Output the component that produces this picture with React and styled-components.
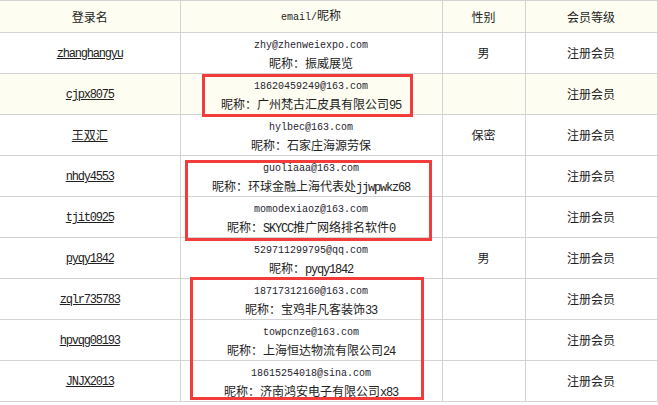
import React from "react";
import styled, { createGlobalStyle } from "styled-components";

const members = [
  { name: "zhanghangyu", email: "zhy@zhenweiexpo.com", nick: "振威展览", sex: "男" },
  { name: "cjpx8075", email: "18620459249@163.com", nick: "广州梵古汇皮具有限公司95", sex: "", shaded: true },
  { name: "王双汇", email: "hylbec@163.com", nick: "石家庄海源劳保", sex: "保密", cjk: true },
  { name: "nhdy4553", email: "guoliaaa@163.com", nick: "环球金融上海代表处jjwpwkz68", sex: "" },
  { name: "tjit0925", email: "momodexiaoz@163.com", nick: "SKYCC推广网络排名软件0", sex: "" },
  { name: "pyqy1842", email: "529711299795@qq.com", nick: "pyqy1842", sex: "男" },
  { name: "zqlr735783", email: "18717312160@163.com", nick: "宝鸡非凡客装饰33", sex: "" },
  { name: "hpvqg08193", email: "towpcnze@163.com", nick: "上海恒达物流有限公司24", sex: "" },
  { name: "JNJX2013", email: "18615254018@sina.com", nick: "济南鸿安电子有限公司x83", sex: "" },
];

// red annotation frames drawn over the table
const marks = [
  { left: 202, top: 74, width: 211, height: 43 },
  { left: 185, top: 160, width: 247, height: 81 },
  { left: 190, top: 277, width: 234, height: 123 },
];

// split a nickname into cjk and latin runs, latin gets the fixed width font
const splitRuns = (text) => text.split(/([A-Za-z0-9]+)/).filter(Boolean);

const GlobalStyle = createGlobalStyle`
  body {
    margin: 0;
    background: #fff;
    font-family: "Noto Sans CJK SC", "Liberation Sans", sans-serif;
    color: #222;
  }
`;

const Wrap = styled.div`
  position: relative;
  width: 658px;
  height: 405px;
  overflow: hidden;
`;

const Table = styled.table`
  width: 657px;
  border-collapse: collapse;
  table-layout: fixed;
`;

const Row = styled.tr`
  height: ${(p) => (p.$head ? "32px" : "41px")};
  background: ${(p) => (p.$shaded ? "#fdfdf1" : "#fff")};
`;

const HeadCell = styled.th`
  border: 1px solid #d3d3d3;
  padding: 0;
  font-weight: normal;
  font-size: 12px;
  line-height: 16px;
  text-align: center;
  vertical-align: middle;
  color: #222;

  &:first-child {
    border-left: none;
  }
`;

const Cell = styled.td`
  border: 1px solid #d3d3d3;
  padding: 0;
  font-size: 12px;
  line-height: 16px;
  text-align: center;
  vertical-align: middle;

  &:first-child {
    border-left: none;
  }
`;

const InfoCell = styled(Cell)`
  vertical-align: top;
  padding-top: 5px;
`;

const Mono = styled.span`
  font-family: "Liberation Mono", "Noto Sans CJK SC", monospace;
  font-size: 10px;
`;

const Latin = styled.span`
  font-family: "Liberation Mono", monospace;
  font-size: 12px;
  letter-spacing: -1.2px;
`;

const NameLink = styled.a`
  color: #222;
  text-decoration: underline;
  font-family: ${(p) =>
    p.$cjk ? `"Noto Sans CJK SC", sans-serif` : `"Liberation Mono", monospace`};
  font-size: 12px;
  letter-spacing: ${(p) => (p.$cjk ? "0" : "-1.2px")};
`;

const Email = styled.div`
  height: 15px;
  font-family: "Liberation Mono", monospace;
  font-size: 10px;
  line-height: 15px;
  color: #1f2430;
`;

const Nick = styled.div`
  height: 20px;
  font-size: 12px;
  line-height: 20px;
  white-space: nowrap;
  overflow: hidden;
`;

const Mark = styled.div`
  position: absolute;
  border: 3px solid #f23b3b;
  box-sizing: border-box;
  pointer-events: none;
`;

export default function App() {
  return (
    <>
      <GlobalStyle />
      <Wrap>
        <Table>
          <colgroup>
            <col style={{ width: 180 }} />
            <col style={{ width: 262 }} />
            <col style={{ width: 83 }} />
            <col style={{ width: 132 }} />
          </colgroup>
          <thead>
            <Row $head $shaded>
              <HeadCell>登录名</HeadCell>
              <HeadCell>
                <Mono>email/</Mono>昵称
              </HeadCell>
              <HeadCell>性别</HeadCell>
              <HeadCell>会员等级</HeadCell>
            </Row>
          </thead>
          <tbody>
            {members.map((m) => (
              <Row key={m.name} $shaded={m.shaded}>
                <Cell>
                  <NameLink href="#" $cjk={m.cjk}>
                    {m.name}
                  </NameLink>
                </Cell>
                <InfoCell>
                  <Email>{m.email}</Email>
                  <Nick>
                    昵称：
                    {splitRuns(m.nick).map((part, i) =>
                      /^[A-Za-z0-9]+$/.test(part) ? (
                        <Latin key={i}>{part}</Latin>
                      ) : (
                        <span key={i}>{part}</span>
                      )
                    )}
                  </Nick>
                </InfoCell>
                <Cell>{m.sex}</Cell>
                <Cell>注册会员</Cell>
              </Row>
            ))}
          </tbody>
        </Table>
        {marks.map((b, i) => (
          <Mark
            key={i}
            style={{ left: b.left, top: b.top, width: b.width, height: b.height }}
          />
        ))}
      </Wrap>
    </>
  );
}
